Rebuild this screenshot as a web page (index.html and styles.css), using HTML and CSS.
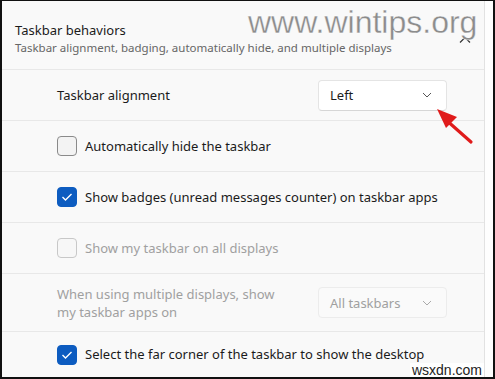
FILE: index.html
```html
<!DOCTYPE html>
<html>
<head>
<meta charset="utf-8">
<link rel="stylesheet" href="styles.css">
</head>
<body>
<div class="frame">
  <div class="panel">
    <div class="header">
      <div class="title">Taskbar behaviors</div>
      <div class="subtitle">Taskbar alignment, badging, automatically hide, and multiple displays</div>
      <svg class="collapse" width="12" height="8" viewBox="0 0 12 8"><path d="M1 6.5 L6 1.5 L11 6.5" fill="none" stroke="#333" stroke-width="1.2"/></svg>
    </div>
    <div class="row row-select">
      <span class="label">Taskbar alignment</span>
      <div class="select">
        <span>Left</span>
        <svg width="10" height="6" viewBox="0 0 10 6"><path d="M1 1 L5 5 L9 1" fill="none" stroke="#555" stroke-width="1"/></svg>
      </div>
    </div>
    <div class="row">
      <span class="box"></span>
      <span class="label">Automatically hide the taskbar</span>
    </div>
    <div class="row">
      <span class="box checked"><svg width="12" height="10" viewBox="0 0 12 10"><path d="M1.5 5 L4.5 8 L10.5 2" fill="none" stroke="#fff" stroke-width="1.4"/></svg></span>
      <span class="label">Show badges (unread messages counter) on taskbar apps</span>
    </div>
    <div class="row disabled">
      <span class="box"></span>
      <span class="label">Show my taskbar on all displays</span>
    </div>
    <div class="row row-select row-tall disabled">
      <span class="label">When using multiple displays, show<br>my taskbar apps on</span>
      <div class="select">
        <span>All taskbars</span>
        <svg width="10" height="6" viewBox="0 0 10 6"><path d="M1 1 L5 5 L9 1" fill="none" stroke="#aaa" stroke-width="1"/></svg>
      </div>
    </div>
    <div class="row row-last">
      <span class="box checked"><svg width="12" height="10" viewBox="0 0 12 10"><path d="M1.5 5 L4.5 8 L10.5 2" fill="none" stroke="#fff" stroke-width="1.4"/></svg></span>
      <span class="label">Select the far corner of the taskbar to show the desktop</span>
    </div>
  </div>
  <div class="strip"></div>
  <div class="watermark">www.wintips.org</div>
  <svg class="arrow" width="50" height="50" viewBox="0 0 50 50">
    <path d="M38 39 L12 16" stroke="#e01b1b" stroke-width="3.2" stroke-linecap="round"/>
    <path d="M4 6 L24 14 L13 25 Z" fill="#e01b1b"/>
  </svg>
  <div class="wsxdn">wsxdn.com</div>
</div>
</body>
</html>
```
FILE: styles.css
```css
* { box-sizing: border-box; }
html, body { margin: 0; padding: 0; background: #fff; }
body { font-family: "Noto Sans", "Open Sans", sans-serif; color: #1b1b1b; }
.frame {
  position: relative;
  width: 495px;
  height: 379px;
  border: 2px solid #111;
  border-top-width: 1px;
  display: flex;
  overflow: hidden;
  background: #fdfdfd;
}
.panel {
  width: 483px;
  flex: none;
  background: #f9f9f9;
  border-right: 1px solid #e2e2e2;
  display: flex;
  flex-direction: column;
}
.strip { flex: 1; background: #fefefe; }
.header {
  position: relative;
  height: 69px;
  padding: 20px 0 0 13px;
  border-bottom: 1px solid #e8e8e8;
}
.title { font-size: 13px; line-height: 18px; color: #1b1b1b; }
.subtitle { font-size: 11.5px; line-height: 18px; color: #666; }
.collapse { position: absolute; left: 457px; top: 35px; }
.row {
  display: flex;
  align-items: center;
  height: 51px;
  padding-left: 55px;
  border-bottom: 1px solid #e8e8e8;
  font-size: 13px;
}
.row-select { justify-content: space-between; padding-right: 37px; height: 51px; }
.row-tall { height: 58px; }
.row-last { border-bottom: none; flex: 1; align-items: flex-start; padding-top: 13px; }
.label { line-height: 18px; }
.box {
  width: 20px;
  height: 20px;
  border: 1px solid #8a8a8a;
  border-radius: 4px;
  background: #f3f3f3;
  margin-right: 8px;
  display: flex;
  align-items: center;
  justify-content: center;
  flex: none;
}
.box.checked { background: #0d5cc0; border-color: #0d5cc0; }
.select {
  width: 129px;
  height: 31px;
  border: 1px solid #e4e4e4;
  border-bottom-color: #d6d6d6;
  border-radius: 4px;
  background: #fff;
  display: flex;
  align-items: center;
  justify-content: space-between;
  padding: 0 14px 0 11px;
}
.disabled { color: #a0a0a0; }
.disabled .box { border-color: #c8c8c8; background: #f7f7f7; }
.disabled .select { background: #fafafa; border-color: #ececec; }
.watermark {
  position: absolute;
  left: 246px;
  top: 1px;
  font-family: "Liberation Sans", sans-serif;
  font-size: 32px;
  line-height: 40px;
  color: #8c8c8c;
  -webkit-text-stroke: 0.3px #fff;
}
.arrow { position: absolute; left: 431px; top: 102px; }
.wsxdn {
  position: absolute;
  right: 9px;
  bottom: 0;
  font-family: "Liberation Sans", sans-serif;
  font-size: 14px;
  line-height: 14px;
  color: #222;
  background: #fff;
  padding: 0 2px;
}
```
